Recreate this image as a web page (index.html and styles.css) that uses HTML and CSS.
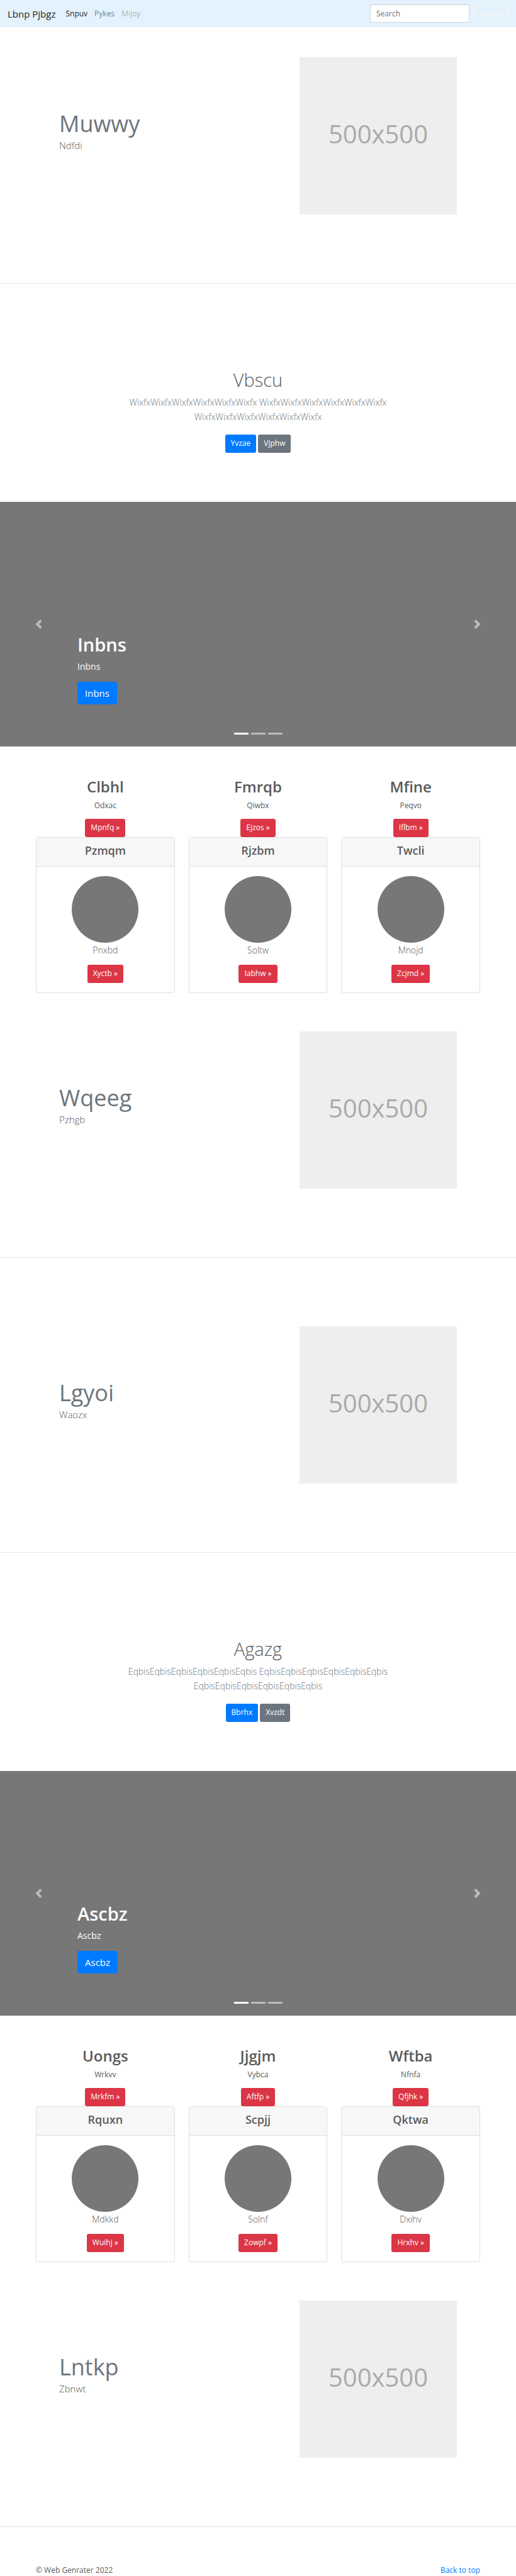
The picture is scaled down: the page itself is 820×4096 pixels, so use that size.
FILE: index.html
```html
<!DOCTYPE html>
<html lang="en">
<head>
<meta charset="utf-8">
<meta name="viewport" content="width=device-width, initial-scale=1">
<title>Lbnp Pjbgz</title>
<link rel="stylesheet" href="styles.css">
</head>
<body>
<header class="navbar" id="top">
  <a class="brand" href="#">Lbnp Pjbgz</a>
  <nav class="nav-links">
    <a class="nav-link active" href="#">Snpuv</a>
    <a class="nav-link" href="#">Pykes</a>
    <a class="nav-link disabled" href="#">Mijoy</a>
  </nav>
  <form class="search">
    <input class="search-input" type="search" placeholder="Search" aria-label="Search">
    <button class="search-button" type="button">Search</button>
  </form>
</header>
<main>
  <section class="feature">
    <div class="feature-text"><h2 class="feature-title">Muwwy</h2><p class="lead">Ndfdi</p></div>
    <div class="placeholder">500x500</div>
  </section>
  <hr class="divider">
  <section class="intro">
    <h1 class="intro-title">Vbscu</h1>
    <p class="intro-text">WixfxWixfxWixfxWixfxWixfxWixfx WixfxWixfxWixfxWixfxWixfxWixfx WixfxWixfxWixfxWixfxWixfxWixfx</p>
    <div class="intro-actions"><a class="btn primary" href="#">Yvzae</a><a class="btn secondary" href="#">Vjphw</a></div>
  </section>
  <section class="carousel">
    <button class="arrow prev" type="button" aria-label="Previous"><svg viewBox="0 0 8 8"><path d="M5.25 0l-4 4 4 4 1.5-1.5L4.25 4l2.5-2.5L5.25 0z"/></svg></button>
    <div class="caption">
      <h1 class="caption-title">Inbns</h1>
      <p class="caption-text">Inbns</p>
      <a class="btn primary large" href="#">Inbns</a>
    </div>
    <button class="arrow next" type="button" aria-label="Next"><svg viewBox="0 0 8 8"><path d="M2.75 0l-1.5 1.5L3.75 4l-2.5 2.5L2.75 8l4-4-4-4z"/></svg></button>
    <div class="indicators"><span class="dot current"></span><span class="dot"></span><span class="dot"></span></div>
  </section>
  <section class="columns">
    <div class="column">
      <h2 class="column-title">Clbhl</h2><p class="column-text">Odxac</p><a class="btn danger" href="#">Mpnfq »</a>
      <article class="card"><h3 class="card-header">Pzmqm</h3><div class="card-body"><span class="avatar"></span><p class="card-text">Pnxbd</p><a class="btn danger" href="#">Xyctb »</a></div></article>
    </div>
    <div class="column">
      <h2 class="column-title">Fmrqb</h2><p class="column-text">Qiwbx</p><a class="btn danger" href="#">Ejzos »</a>
      <article class="card"><h3 class="card-header">Rjzbm</h3><div class="card-body"><span class="avatar"></span><p class="card-text">Soltw</p><a class="btn danger" href="#">Iabhw »</a></div></article>
    </div>
    <div class="column">
      <h2 class="column-title">Mfine</h2><p class="column-text">Peqvo</p><a class="btn danger" href="#">Iflbm »</a>
      <article class="card"><h3 class="card-header">Twcli</h3><div class="card-body"><span class="avatar"></span><p class="card-text">Mnojd</p><a class="btn danger" href="#">Zcjmd »</a></div></article>
    </div>
  </section>
  <section class="feature">
    <div class="feature-text"><h2 class="feature-title">Wqeeg</h2><p class="lead">Pzhgb</p></div>
    <div class="placeholder">500x500</div>
  </section>
  <hr class="divider">
  <section class="feature spaced">
    <div class="feature-text"><h2 class="feature-title">Lgyoi</h2><p class="lead">Waozx</p></div>
    <div class="placeholder">500x500</div>
  </section>
  <hr class="divider">
  <section class="intro">
    <h1 class="intro-title">Agazg</h1>
    <p class="intro-text">EqbisEqbisEqbisEqbisEqbisEqbis EqbisEqbisEqbisEqbisEqbisEqbis EqbisEqbisEqbisEqbisEqbisEqbis</p>
    <div class="intro-actions"><a class="btn primary" href="#">Bbrhx</a><a class="btn secondary" href="#">Xvzdt</a></div>
  </section>
  <section class="carousel">
    <button class="arrow prev" type="button" aria-label="Previous"><svg viewBox="0 0 8 8"><path d="M5.25 0l-4 4 4 4 1.5-1.5L4.25 4l2.5-2.5L5.25 0z"/></svg></button>
    <div class="caption">
      <h1 class="caption-title">Ascbz</h1>
      <p class="caption-text">Ascbz</p>
      <a class="btn primary large" href="#">Ascbz</a>
    </div>
    <button class="arrow next" type="button" aria-label="Next"><svg viewBox="0 0 8 8"><path d="M2.75 0l-1.5 1.5L3.75 4l-2.5 2.5L2.75 8l4-4-4-4z"/></svg></button>
    <div class="indicators"><span class="dot current"></span><span class="dot"></span><span class="dot"></span></div>
  </section>
  <section class="columns">
    <div class="column">
      <h2 class="column-title">Uongs</h2><p class="column-text">Wrkvv</p><a class="btn danger" href="#">Mrkfm »</a>
      <article class="card"><h3 class="card-header">Rquxn</h3><div class="card-body"><span class="avatar"></span><p class="card-text">Mdkkd</p><a class="btn danger" href="#">Wuihj »</a></div></article>
    </div>
    <div class="column">
      <h2 class="column-title">Jjgjm</h2><p class="column-text">Vybca</p><a class="btn danger" href="#">Aftfp »</a>
      <article class="card"><h3 class="card-header">Scpjj</h3><div class="card-body"><span class="avatar"></span><p class="card-text">Solnf</p><a class="btn danger" href="#">Zowpf »</a></div></article>
    </div>
    <div class="column">
      <h2 class="column-title">Wftba</h2><p class="column-text">Nfnfa</p><a class="btn danger" href="#">Qfjhk »</a>
      <article class="card"><h3 class="card-header">Qktwa</h3><div class="card-body"><span class="avatar"></span><p class="card-text">Dxihv</p><a class="btn danger" href="#">Hrxhv »</a></div></article>
    </div>
  </section>
  <section class="feature">
    <div class="feature-text"><h2 class="feature-title">Lntkp</h2><p class="lead">Zbnwt</p></div>
    <div class="placeholder">500x500</div>
  </section>
  <hr class="divider">
</main>
<footer class="footer">
  <span>© Web Genrater 2022</span>
  <a class="back" href="#top">Back to top</a>
</footer>
</body>
</html>
```
FILE: styles.css
```css
* { box-sizing: border-box; }

body {
  margin: 0;
  background: #fff;
  color: #5a5a5a;
  font-family: "Open Sans", "Noto Sans", sans-serif;
  font-size: 12px;
  line-height: 18px;
}

h1, h2, h3, p { margin: 0; }
a { text-decoration: none; }

.navbar {
  display: flex;
  align-items: center;
  padding: 7px 12px;
  background: #e3f2fd;
}
.brand { margin-right: 16px; color: rgba(0, 0, 0, .9); font-size: 15px; line-height: 28px; }
.nav-links { display: flex; flex: 1; gap: 11px; }
.nav-link { color: rgba(0, 0, 0, .5); }
.nav-link.active { color: rgba(0, 0, 0, .9); }
.nav-link.disabled { color: rgba(0, 0, 0, .3); }
.search { display: flex; gap: 6px; }
.search-input, .search-button {
  height: 29px;
  border: 1px solid #ced4da;
  border-radius: 3px;
  font: inherit;
}
.search-input { width: 158px; padding: 0 9px; background: #fff; color: #495057; }
.search-input::placeholder { color: #6c757d; opacity: 1; }
.search-button { padding: 0 8px; border-color: #f8f9fa; background: transparent; color: #f8f9fa; }

.feature {
  display: grid;
  grid-template-columns: 1fr 250px;
  align-items: center;
  padding: 48px 94px 109px;
}
.feature.spaced { padding-top: 109px; }
.feature-text { padding-bottom: 16px; }
.feature-title { color: #6c757d; font-size: 36px; font-weight: 400; line-height: 46px; }
.lead { font-size: 15px; font-weight: 300; line-height: 23px; }
.placeholder {
  display: flex;
  align-items: center;
  justify-content: center;
  aspect-ratio: 1;
  padding-bottom: 6px;
  background: #eee;
  color: #aaa;
  font-size: 40px;
}
.divider { height: 1px; margin: 0; border: 0; background: #e5e5e5; }

.intro { padding: 135px 160px 78px; text-align: center; }
.intro-title { margin-bottom: 6px; font-size: 29px; font-weight: 300; line-height: 36px; }
.intro-text { max-width: 440px; margin: 0 auto 17px; color: #6c757d; font-size: 14px; font-weight: 300; line-height: 23px; }
.intro-actions { display: flex; justify-content: center; gap: 3px; }

.btn {
  display: inline-block;
  padding: 5px 9px 6px;
  border-radius: 3px;
  color: #fff;
}
.primary { background: #007bff; }
.secondary { background: #6c757d; }
.danger { background: #dc3545; }
.large { padding: 7px 12px; border-radius: 4px; font-size: 15px; line-height: 22px; }

.carousel {
  position: relative;
  display: flex;
  align-items: center;
  justify-content: space-between;
  height: 389px;
  background: #777;
}
.arrow { display: flex; justify-content: center; width: 15%; padding: 0; border: 0; background: none; opacity: .5; }
.arrow svg { width: 15px; height: 15px; fill: #fff; }
.caption { flex: 1; align-self: flex-end; padding-bottom: 67px; color: #fff; }
.caption-title { margin-bottom: 5px; font-size: 29px; font-weight: 600; line-height: 36px; }
.caption-text { margin-bottom: 13px; font-size: 14px; line-height: 23px; }
.indicators { position: absolute; right: 0; bottom: 19px; left: 0; display: flex; justify-content: center; gap: 4px; }
.dot { width: 23px; height: 3px; background: #fff; opacity: .5; }
.dot.current { opacity: 1; }

.columns { display: grid; grid-template-columns: repeat(3, 1fr); gap: 22px; padding: 49px 57px 13px; }
.column { display: flex; flex-direction: column; align-items: center; text-align: center; }
.column-title { margin-bottom: 6px; font-size: 24px; font-weight: 600; line-height: 30px; }
.column-text { margin-bottom: 12px; }
.card { align-self: stretch; border: 1px solid #dfdfdf; border-radius: 3px; }
.card-header { padding: 9px 15px 14px; border-bottom: 1px solid #dfdfdf; background: #f7f7f7; font-size: 18px; font-weight: 600; line-height: 22px; }
.card-body { display: flex; flex-direction: column; align-items: center; padding: 15px; }
.avatar { width: 106px; height: 106px; border-radius: 50%; background: #777; }
.card-text { margin-bottom: 12px; font-size: 14px; font-weight: 300; line-height: 23px; }

.footer { display: flex; justify-content: space-between; padding: 60px 57px 0; }
.back { color: #007bff; }
```
